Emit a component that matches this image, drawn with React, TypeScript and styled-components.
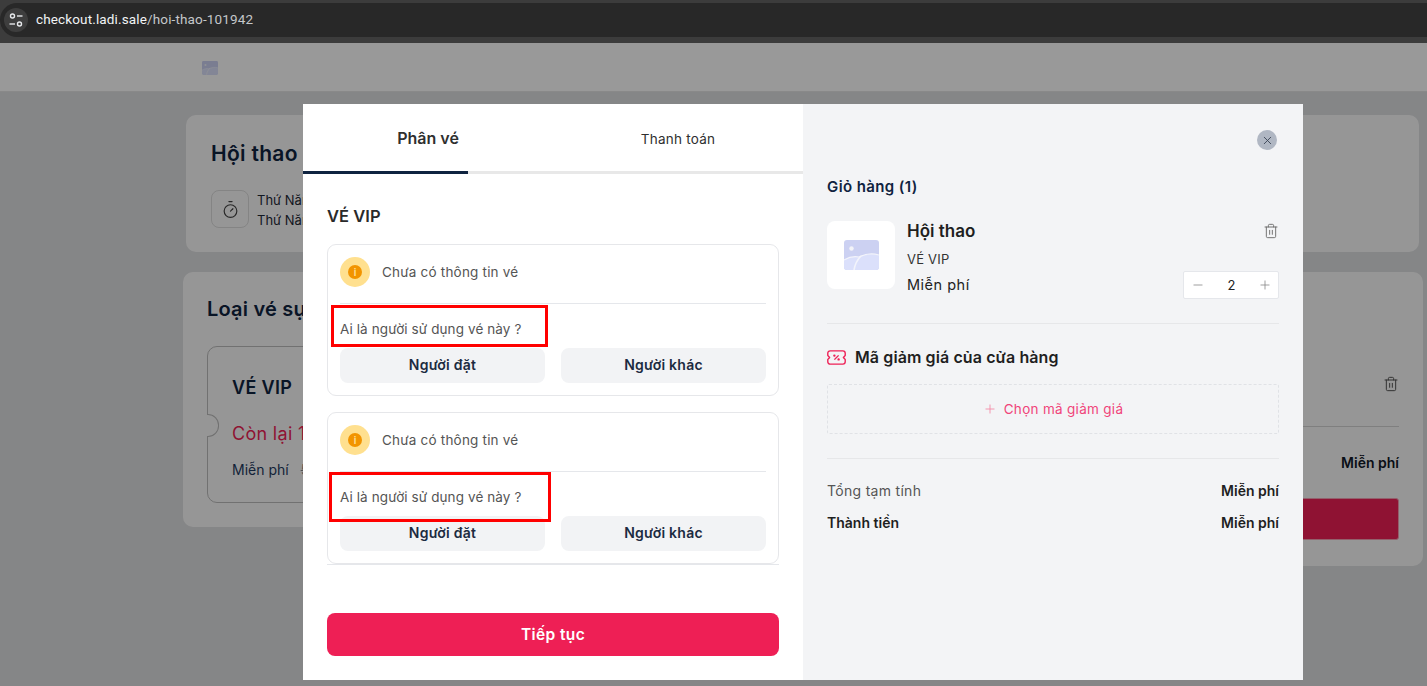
import { Minus, Plus, Timer, Trash2, X } from "lucide-react";
import styled, { createGlobalStyle } from "styled-components";

const GlobalStyle = createGlobalStyle`
    html, body {
        margin: 0;
        padding: 0;
        background: #dfe0e2;
    }
    * {
        box-sizing: border-box;
    }
`;

const Screen = styled.div`
    position: relative;
    width: 1427px;
    height: 686px;
    overflow: hidden;
    font-family: Inter, "Noto Sans", sans-serif;
    color: #1f2937;
`;

//browser chrome start
const BrowserBar = styled.div`
    height: 43px;
    padding-top: 3px;
    background: #3c3c3c;
`;
const AddressPill = styled.div`
    display: flex;
    align-items: center;
    gap: 8px;
    height: 34px;
    background: #282828;
    border-radius: 17px 0 0 17px;
    padding-left: 4px;
`;
const TuneButton = styled.div`
    display: flex;
    align-items: center;
    justify-content: center;
    width: 24px;
    height: 24px;
    border-radius: 50%;
    background: #3e3e3e;
`;
const Url = styled.span`
    font: 13.5px Roboto, sans-serif;
    color: #f1f3f4;
    letter-spacing: 0.14px;
    position: relative;
    top: -1px;
    span {
        color: #c4c7ca;
    }
`;
//browser chrome end

const PageArea = styled.div`
    position: relative;
    height: 643px;
    background: #dedfe1;
`;
const PageHeader = styled.header`
    display: flex;
    align-items: center;
    height: 49px;
    padding: 2px 0 0 202px;
    background: #ffffff;
    border-bottom: 1px solid #e4e4e4;
`;
const PageContent = styled.main`
    display: flex;
    flex-direction: column;
    gap: 20px;
    padding: 23px 4px 0 183px;
`;
const HeroCard = styled.section`
    height: 137px;
    margin: 0 4px 0 3px;
    padding: 24px 25px;
    background: #fbfbfb;
    border-radius: 10px;
`;
const HeroTitle = styled.h1`
    margin: 0 0 21px;
    font-size: 21px;
    line-height: 30px;
    font-weight: 600;
    color: #0f2340;
    letter-spacing: 0.3px;
`;
const DateRow = styled.div`
    display: flex;
    gap: 8px;
`;
const ClockBox = styled.div`
    display: flex;
    align-items: center;
    justify-content: center;
    width: 38px;
    height: 38px;
    border: 1px solid #dcdcdc;
    border-radius: 8px;
    color: #444;
`;
const DateLines = styled.div`
    font-size: 13px;
    line-height: 20px;
    color: #1f2937;
`;
const ColumnsRow = styled.div`
    display: grid;
    grid-template-columns: 640px 1fr;
    gap: 20px;
    align-items: start;
`;
const Panel = styled.section<{ $height: number }>`
    height: ${(p) => p.$height}px;
    padding: 24px;
    background: #fbfbfb;
    border-radius: 10px;
`;
const PanelTitle = styled.h2`
    margin: 0 0 23px;
    font-size: 20px;
    line-height: 27px;
    font-weight: 600;
    color: #0f2340;
    letter-spacing: 0.2px;
`;
const EventTicket = styled.div`
    position: relative;
    height: 157px;
    padding: 28px 24px;
    border: 1px solid #bcbcbc;
    border-radius: 10px;
    &::before {
        content: "";
        position: absolute;
        left: -1px;
        top: 67px;
        width: 11px;
        height: 21px;
        background: #fbfbfb;
        border: 1px solid #bcbcbc;
        border-left: none;
        border-radius: 0 11px 11px 0;
    }
`;
const EventTicketName = styled.div`
    font-size: 18px;
    line-height: 26px;
    font-weight: 600;
    color: #0f2340;
    letter-spacing: 0.35px;
`;
const Remaining = styled.div`
    margin-top: 20px;
    font-size: 18px;
    line-height: 26px;
    color: #ee1f55;
    letter-spacing: 0.3px;
`;
const EventPrice = styled.div`
    display: flex;
    gap: 12px;
    margin-top: 13px;
    font-size: 14px;
    line-height: 20px;
    color: #1e3a5f;
    s {
        color: #8a8a8a;
    }
`;
const SideTrash = styled.div`
    display: flex;
    justify-content: flex-end;
    margin: 80px 0 34px;
    color: #555;
`;
const SideDivider = styled.div`
    height: 1px;
    margin-left: -24px;
    background: #d4d4d4;
`;
const SideTotal = styled.div`
    margin-top: 26px;
    text-align: right;
    font-size: 14px;
    line-height: 20px;
    font-weight: 600;
    color: #111827;
`;
const SideButton = styled.div`
    height: 42px;
    margin-top: 25px;
    background: #ee1f55;
    border: 1px solid #f5a0b5;
    border-radius: 3px;
`;
const Backdrop = styled.div`
    position: absolute;
    inset: 0;
    background: rgba(0, 0, 0, 0.4);
`;

//modal start
const Modal = styled.div`
    position: absolute;
    left: 303px;
    top: 61px;
    display: flex;
    width: 1000px;
    height: 576px;
    background: #ffffff;
`;
const LeftPane = styled.div`
    display: flex;
    flex-direction: column;
    width: 500px;
    background: #ffffff;
`;
const Tabs = styled.div`
    position: relative;
    display: grid;
    grid-template-columns: 1fr 1fr;
    align-items: center;
    height: 70px;
    border-bottom: 3px solid #e8e8e8;
`;
const TabActive = styled.div`
    position: absolute;
    left: 0;
    bottom: -3px;
    width: 165px;
    height: 3px;
    background: #0f2340;
`;
const TabLabel = styled.div<{ $active?: boolean }>`
    text-align: center;
    font-size: ${(p) => (p.$active ? 16 : 13.5)}px;
    font-weight: ${(p) => (p.$active ? 600 : 400)};
    letter-spacing: ${(p) => (p.$active ? 0 : 0.25)}px;
    color: #2f2f2f;
    padding-top: ${(p) => (p.$active ? 0 : 3)}px;
`;
const TicketsArea = styled.div`
    padding: 0 24px;
    flex: 1;
`;
const SectionTitle = styled.h3`
    margin: 32px 0 18px;
    font-size: 16.5px;
    line-height: 20px;
    font-weight: 600;
    color: #2a2a2a;
    letter-spacing: 0.05px;
`;
const TicketList = styled.div`
    display: flex;
    flex-direction: column;
    gap: 16px;
    height: 321px;
    overflow: hidden;
    border-bottom: 1px solid #e5e7eb;
`;
const TicketCard = styled.div`
    flex: none;
    height: 152px;
    padding: 12px 12px 0;
    border: 1px solid #e6e7ea;
    border-radius: 9px;
`;
const TicketStatus = styled.div`
    display: flex;
    align-items: center;
    gap: 12px;
    height: 47px;
    padding-bottom: 16px;
    border-bottom: 1px solid #e5e7eb;
`;
const StatusBadge = styled.div`
    display: flex;
    align-items: center;
    justify-content: center;
    width: 30px;
    height: 30px;
    border-radius: 50%;
    background: #ffe08f;
`;
const StatusDot = styled.div`
    display: flex;
    align-items: center;
    justify-content: center;
    width: 14px;
    height: 14px;
    border-radius: 50%;
    background: #f29400;
    color: #ffe3a0;
    font-size: 10px;
    font-weight: 600;
`;
const StatusText = styled.span`
    font-size: 13.5px;
    color: #555555;
    letter-spacing: 0.2px;
`;
const Question = styled.div`
    margin-top: 15px;
    font-size: 13.5px;
    line-height: 20px;
    color: #555555;
    letter-spacing: 0.1px;
`;
const ChoiceRow = styled.div`
    display: grid;
    grid-template-columns: 1fr 1fr;
    gap: 16px;
    margin-top: 9px;
`;
const ChoiceButton = styled.button`
    height: 35px;
    padding: 0 0 2px;
    border: none;
    border-radius: 8px;
    background: #f2f3f5;
    font-family: inherit;
    font-size: 14px;
    font-weight: 600;
    color: #1c2b41;
    letter-spacing: 0.25px;
`;
const ContinueWrap = styled.div`
    padding: 0 24px 24px;
`;
const ContinueButton = styled.button`
    display: block;
    width: 100%;
    height: 43px;
    border: none;
    border-radius: 8px;
    background: #ee1f55;
    font-family: inherit;
    font-size: 15.5px;
    font-weight: 600;
    color: #ffffff;
    letter-spacing: 0.4px;
`;
const RightPane = styled.div`
    display: flex;
    flex-direction: column;
    width: 500px;
    padding: 26px 24px 0;
    background: #f3f4f6;
`;
const CloseRow = styled.div`
    display: flex;
    justify-content: flex-end;
    padding-right: 2px;
`;
const CloseButton = styled.div`
    display: flex;
    align-items: center;
    justify-content: center;
    width: 20px;
    height: 20px;
    border-radius: 50%;
    background: #b0b7c3;
    color: #374151;
`;
const CartTitle = styled.h3`
    margin: 27px 0 24px;
    font-size: 15px;
    line-height: 20px;
    font-weight: 600;
    color: #0f2340;
    letter-spacing: 0.4px;
`;
const CartItem = styled.div`
    display: flex;
    gap: 12px;
    height: 78px;
`;
const Thumb = styled.div`
    display: flex;
    align-items: center;
    justify-content: center;
    flex: none;
    width: 68px;
    height: 68px;
    background: #ffffff;
    border-radius: 8px;
`;
const CartInfo = styled.div`
    position: relative;
    flex: 1;
`;
const CartName = styled.div`
    font-size: 17px;
    line-height: 20px;
    font-weight: 600;
    color: #1f1f1f;
`;
const CartVariant = styled.div`
    margin-top: 8px;
    font-size: 13px;
    line-height: 20px;
    color: #333;
    letter-spacing: 0.2px;
`;
const CartPrice = styled.div`
    margin-top: 6px;
    font-size: 14.5px;
    line-height: 20px;
    color: #222;
    letter-spacing: 0.5px;
`;
const CartTrash = styled.div`
    position: absolute;
    right: 0;
    top: 2px;
    color: #6b6b6b;
`;
const Stepper = styled.div`
    position: absolute;
    right: 0;
    top: 50px;
    display: flex;
    align-items: center;
    justify-content: space-between;
    width: 96px;
    height: 28px;
    padding: 0 6px 0 7px;
    background: #ffffff;
    border: 1px solid #e5e7eb;
    border-radius: 2px;
    font-size: 13px;
    color: #222;
    svg {
        color: #8b8b8b;
    }
`;
const Divider = styled.div<{ $gap: number }>`
    height: 1px;
    margin-top: ${(p) => p.$gap}px;
    background: #e6e7e9;
`;
const CouponTitle = styled.div`
    display: flex;
    align-items: center;
    gap: 9px;
    margin-top: 23px;
    height: 20px;
    font-size: 16px;
    font-weight: 600;
    color: #1f1f1f;
    letter-spacing: 0.1px;
`;
const CouponPicker = styled.div`
    display: flex;
    align-items: center;
    justify-content: center;
    gap: 7px;
    height: 50px;
    margin-top: 17px;
    border: 1px dashed #e0e2e6;
    border-radius: 2px;
    font-size: 13.5px;
    color: #f0447a;
    letter-spacing: 0.3px;
    svg {
        color: #f58aa6;
    }
`;
const TotalRow = styled.div<{ $gap: number; $strong?: boolean }>`
    display: flex;
    justify-content: space-between;
    margin-top: ${(p) => p.$gap}px;
    font-size: 14px;
    line-height: 20px;
    color: #1f1f1f;
    span:first-child {
        font-weight: ${(p) => (p.$strong ? 600 : 400)};
        color: ${(p) => (p.$strong ? "#1f1f1f" : "#555")};
        letter-spacing: ${(p) => (p.$strong ? 0 : 0.3)}px;
    }
    span:last-child {
        font-weight: 600;
    }
`;
//modal end

// the red boxes were painted onto the screenshot by hand
const Annotation = styled.div<{ $left: number; $top: number; $width: number; $height: number }>`
    position: absolute;
    left: ${(p) => p.$left}px;
    top: ${(p) => p.$top}px;
    width: ${(p) => p.$width}px;
    height: ${(p) => p.$height}px;
    border: 3px solid #ff0000;
`;

function ImagePlaceholder({ width }: { width: number }) {
    return (
        <svg width={width} height={(width * 30) / 35} viewBox="0 0 35 30">
            <rect width="35" height="30" rx="3" fill="#ccd1f2" />
            <circle cx="7.5" cy="8.5" r="2.2" fill="#f3f4f8" />
            <path d="M0 20c5-3 10-4 15-3 6-3 13-4 20-2v12a3 3 0 0 1-3 3H3a3 3 0 0 1-3-3Z" fill="#dbe0fb" />
            <path d="M0 20c5-3 10-4 15-3 6-3 13-4 20-2" fill="none" stroke="#f3f4fb" strokeWidth="1.2" />
            <path d="M10 30c1-6 3-10 7-14" fill="none" stroke="#f3f4fb" strokeWidth="1.6" />
        </svg>
    );
}

function TuneIcon() {
    return (
        <svg width="16" height="16" viewBox="0 0 16 16" fill="none" stroke="#e8eaed" strokeWidth="1.4">
            <circle cx="4.5" cy="4" r="2" />
            <path d="M9 4h5.5" />
            <path d="M1.5 12H7" />
            <circle cx="11.5" cy="12" r="2" />
        </svg>
    );
}

function CouponIcon() {
    return (
        <svg width="19" height="15" viewBox="0 0 18 14" fill="none" stroke="#ee1f55" strokeWidth="1.3" strokeLinejoin="round">
            <path d="M3 .75h12A2.25 2.25 0 0 1 17.25 3v2.2L15.5 7l1.75 1.8V11A2.25 2.25 0 0 1 15 13.25H3A2.25 2.25 0 0 1 .75 11V8.8L2.5 7 .75 5.2V3A2.25 2.25 0 0 1 3 .75Z" />
            <path d="M11 5 7 9" />
            <circle cx="7" cy="5.2" r=".5" fill="#ee1f55" />
            <circle cx="11" cy="8.8" r=".5" fill="#ee1f55" />
        </svg>
    );
}

function AssignCard() {
    return (
        <TicketCard>
            <TicketStatus>
                <StatusBadge>
                    <StatusDot>i</StatusDot>
                </StatusBadge>
                <StatusText>Chưa có thông tin vé</StatusText>
            </TicketStatus>
            <Question>Ai là người sử dụng vé này ?</Question>
            <ChoiceRow>
                <ChoiceButton>Người đặt</ChoiceButton>
                <ChoiceButton>Người khác</ChoiceButton>
            </ChoiceRow>
        </TicketCard>
    );
}

export default function App() {
    return (
        <Screen>
            <GlobalStyle />
            <BrowserBar>
                <AddressPill>
                    <TuneButton>
                        <TuneIcon />
                    </TuneButton>
                    <Url>
                        checkout.ladi.sale<span>/hoi-thao-101942</span>
                    </Url>
                </AddressPill>
            </BrowserBar>
            <PageArea>
                <PageHeader>
                    <ImagePlaceholder width={16} />
                </PageHeader>
                <PageContent>
                    <HeroCard>
                        <HeroTitle>Hội thao</HeroTitle>
                        <DateRow>
                            <ClockBox>
                                <Timer size={19} strokeWidth={1.5} />
                            </ClockBox>
                            <DateLines>
                                Thứ Năm
                                <br />
                                Thứ Năm
                            </DateLines>
                        </DateRow>
                    </HeroCard>
                    <ColumnsRow>
                        <Panel $height={255}>
                            <PanelTitle>Loại vé sự</PanelTitle>
                            <EventTicket>
                                <EventTicketName>VÉ VIP</EventTicketName>
                                <Remaining>Còn lại 1</Remaining>
                                <EventPrice>
                                    Miễn phí <s>5</s>
                                </EventPrice>
                            </EventTicket>
                        </Panel>
                        <Panel $height={294}>
                            <SideTrash>
                                <Trash2 size={16} strokeWidth={1.5} />
                            </SideTrash>
                            <SideDivider />
                            <SideTotal>Miễn phí</SideTotal>
                            <SideButton />
                        </Panel>
                    </ColumnsRow>
                </PageContent>
                <Backdrop />
                <Modal>
                    <LeftPane>
                        <Tabs>
                            <TabLabel $active>Phân vé</TabLabel>
                            <TabLabel>Thanh toán</TabLabel>
                            <TabActive />
                        </Tabs>
                        <TicketsArea>
                            <SectionTitle>VÉ VIP</SectionTitle>
                            <TicketList>
                                <AssignCard />
                                <AssignCard />
                            </TicketList>
                        </TicketsArea>
                        <ContinueWrap>
                            <ContinueButton>Tiếp tục</ContinueButton>
                        </ContinueWrap>
                    </LeftPane>
                    <RightPane>
                        <CloseRow>
                            <CloseButton>
                                <X size={13} strokeWidth={1.6} />
                            </CloseButton>
                        </CloseRow>
                        <CartTitle>Giỏ hàng (1)</CartTitle>
                        <CartItem>
                            <Thumb>
                                <ImagePlaceholder width={35} />
                            </Thumb>
                            <CartInfo>
                                <CartName>Hội thao</CartName>
                                <CartVariant>VÉ VIP</CartVariant>
                                <CartPrice>Miễn phí</CartPrice>
                                <CartTrash>
                                    <Trash2 size={16} strokeWidth={1.4} />
                                </CartTrash>
                                <Stepper>
                                    <Minus size={14} strokeWidth={1.4} />
                                    2
                                    <Plus size={14} strokeWidth={1.4} />
                                </Stepper>
                            </CartInfo>
                        </CartItem>
                        <Divider $gap={24} />
                        <CouponTitle>
                            <CouponIcon />
                            Mã giảm giá của cửa hàng
                        </CouponTitle>
                        <CouponPicker>
                            <Plus size={14} strokeWidth={1.5} />
                            Chọn mã giảm giá
                        </CouponPicker>
                        <Divider $gap={24} />
                        <TotalRow $gap={22}>
                            <span>Tổng tạm tính</span>
                            <span>Miễn phí</span>
                        </TotalRow>
                        <TotalRow $gap={12} $strong>
                            <span>Thành tiền</span>
                            <span>Miễn phí</span>
                        </TotalRow>
                    </RightPane>
                </Modal>
            </PageArea>
            <Annotation $left={331} $top={305} $width={217} $height={42} />
            <Annotation $left={329} $top={472} $width={222} $height={50} />
        </Screen>
    );
}
